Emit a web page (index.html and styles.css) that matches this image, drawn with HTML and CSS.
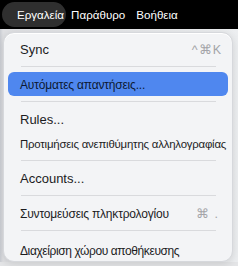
FILE: index.html
```html
<!DOCTYPE html>
<html>
<head>
<meta charset="utf-8">
<link rel="stylesheet" href="styles.css">
</head>
<body>
<div class="menubar">
  <span class="mb-item active">Εργαλεία</span>
  <span class="mb-item">Παράθυρο</span>
  <span class="mb-item">Βοήθεια</span>
</div>
<div class="desk">
  <div class="menu">
    <div class="row"><span>Sync</span><span class="sc">^&#8984;K</span></div>
    <div class="sep"></div>
    <div class="row hl gr"><span>Αυτόματες απαντήσεις...</span></div>
    <div class="sep"></div>
    <div class="row"><span>Rules...</span></div>
    <div class="row small"><span>Προτιμήσεις ανεπιθύμητης αλληλογραφίας</span></div>
    <div class="sep"></div>
    <div class="row"><span>Accounts...</span></div>
    <div class="sep"></div>
    <div class="row gr"><span>Συντομεύσεις πληκτρολογίου</span><span class="sc sc2">&#8984; .</span></div>
    <div class="sep"></div>
    <div class="row gr last"><span>Διαχείριση χώρου αποθήκευσης</span></div>
  </div>
</div>
</body>
</html>
```
FILE: styles.css
```css
html, body {
  margin: 0;
  padding: 0;
  width: 238px;
  height: 266px;
  overflow: hidden;
  background: #e4e5e7;
  font-family: "Liberation Sans", Arial, sans-serif;
}
.menubar {
  height: 29px;
  background: #000;
  display: flex;
  align-items: center;
  padding-left: 2px;
  color: #fff;
  font-size: 11.6px;
  white-space: nowrap;
}
.mb-item {
  line-height: 25px;
  margin-right: 11px;
}
.mb-item.active {
  background: #2f2f2f;
  border-radius: 13px;
  padding: 0 2px 0 15px;
  margin-right: 5px;
}
.desk {
  padding: 3px 0 0 3px;
  background: linear-gradient(90deg, #c9ccd2 0, #dfe0e3 3px, #eceef0 100%);
}
.menu {
  width: 230px;
  height: 230px;
  box-sizing: border-box;
  background: #f3f4f6;
  border: 1px solid #d6d8dc;
  border-radius: 11px;
  box-shadow: 0 2px 8px rgba(0,0,0,0.12), inset 0 1px 0 #fff;
  padding: 4px 4px 0 4px;
  display: flex;
  flex-direction: column;
  font-size: 13px;
  color: #1c1c1e;
  white-space: nowrap;
}
.row {
  height: 24px;
  flex: none;
  display: flex;
  align-items: center;
  justify-content: space-between;
  padding: 1px 12px 0 12px;
  box-sizing: border-box;
  border-radius: 6px;
}
.row.gr {
  font-size: 12px;
  letter-spacing: -0.2px;
}
.row.hl {
  background: #4f87ef;
  color: #0d1a33;
}
.row.small {
  font-size: 11.4px;
  padding-right: 2px;
  letter-spacing: -0.2px;
}
.row.last {
  margin-top: 2px;
  letter-spacing: -0.4px;
}
.sc {
  color: #a3a4a8;
  font-size: 12.5px;
  letter-spacing: 1px;
  margin-right: -6px;
}
.sc2 {
  margin-right: -3px;
}
.sep {
  height: 1px;
  flex: none;
  background: #d9dadd;
  margin: 5px 12px 5px 13px;
}
```
